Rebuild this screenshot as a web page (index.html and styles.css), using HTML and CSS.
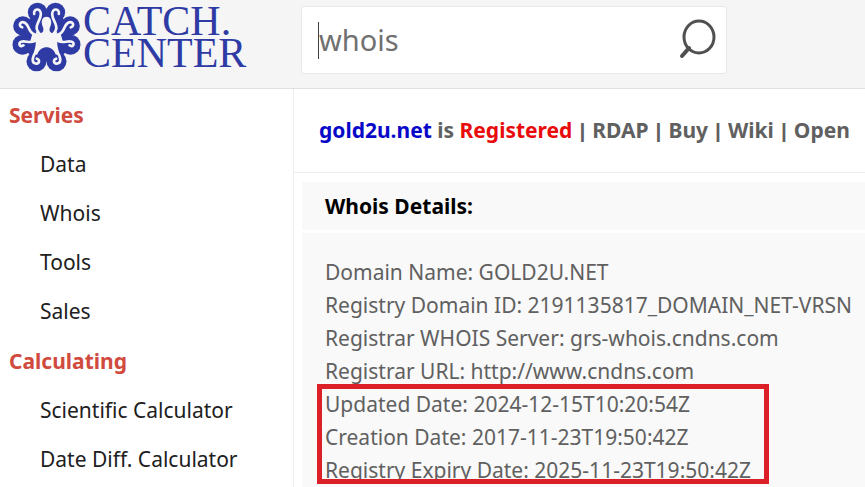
FILE: index.html
```
<!DOCTYPE html>
<html lang="en">
<head>
  <meta charset="UTF-8" />
  <meta name="viewport" content="width=device-width, initial-scale=1.0" />
  <title>gold2u.net - Whois - Catch.Center</title>
  <link rel="stylesheet" href="styles.css">
</head>
<body>

  <header class="header">
    <a class="logo" href="#">
      <svg class="logo-mark" viewBox="14 6 204 210" aria-hidden="true">
        <g fill="#2f3ba5">
          <circle cx="89" cy="37" r="29" />
          <circle cx="143" cy="37" r="29" />
          <circle cx="187" cy="78" r="29" />
          <circle cx="45" cy="78" r="29" />
          <circle cx="44" cy="134" r="30" />
          <circle cx="188" cy="134" r="30" />
          <circle cx="86" cy="184" r="30" />
          <circle cx="146" cy="184" r="30" />
          <circle cx="116" cy="110" r="74" />
        </g>
        <g fill="none" stroke="#f5f5f5" stroke-width="8" stroke-linecap="round" stroke-linejoin="round">
          <path d="M79 42C76 26 98 22 99 42C99 60 83 72 87 88C89 97 95 102 101 108" />
          <path d="M153 42C156 26 134 22 133 42C133 60 149 72 145 88C143 97 137 102 131 108" />
          <path d="M43 82C31 78 36 64 48 67C64 71 60 94 76 101L98 110" />
          <path d="M189 82C201 78 196 64 184 67C168 71 172 94 156 101L134 110" />
          <path d="M47 136C37 144 29 129 40 125C54 121 66 131 80 123L98 116" />
          <path d="M185 136C195 144 203 129 192 125C178 121 166 131 152 123L134 116" />
          <path d="M87 176C99 180 93 195 81 190C69 185 76 167 84 156L96 134" />
          <path d="M145 176C133 180 139 195 151 190C163 185 156 167 148 156L136 134" />
        </g>
        <g fill="#f5f5f5">
          <path d="M116 50C105 50 101 60 102 70C103 80 109 85 106 94C102 102 92 102 84 94L86 106L74 100L66 128L84 126C84 140 80 150 77 162L88 164C94 148 104 142 116 142C128 142 138 148 144 164L155 162C152 150 148 140 148 126L166 128L158 100L146 106L148 94C140 102 130 102 126 94C123 85 129 80 130 70C131 60 127 50 116 50Z" />
        </g>
      </svg>
      <span class="logo-text">CATCH.<br>CENTER</span>
    </a>
    <form class="search">
      <span class="search-cursor"></span>
      <input class="search-input" type="text" aria-label="Search" value="whois">
      <button class="search-button" type="button" aria-label="Search">
        <svg viewBox="0 0 42 42" width="42" height="42" fill="none" stroke="#505050" stroke-linecap="round">
          <ellipse cx="23" cy="18" rx="15" ry="16" stroke-width="3" />
          <path d="M13 29L6 37" stroke-width="4" />
        </svg>
      </button>
    </form>
  </header>

  <div class="page">
    <nav class="sidebar">
      <h2>Servies</h2>
      <ul>
        <li><a href="#">Data</a></li>
        <li><a href="#">Whois</a></li>
        <li><a href="#">Tools</a></li>
        <li><a href="#">Sales</a></li>
      </ul>
      <h2>Calculating</h2>
      <ul>
        <li><a href="#">Scientific Calculator</a></li>
        <li><a href="#">Date Diff. Calculator</a></li>
      </ul>
    </nav>

    <main class="content">
      <h1 class="status">
        <span><a class="domain" href="#">gold2u.net</a> is <span class="registered">Registered</span></span>
        <span class="pipe">|</span>
        <a href="#">RDAP</a>
        <span class="pipe">|</span>
        <a href="#">Buy</a>
        <span class="pipe">|</span>
        <a href="#">Wiki</a>
        <span class="pipe">|</span>
        <a href="#">Open</a>
      </h1>
      <section class="details">
        <h2 class="details-title">Whois Details:</h2>
        <div class="details-body">
          <div>Domain Name: GOLD2U.NET</div>
          <div>Registry Domain ID: 2191135817_DOMAIN_NET-VRSN</div>
          <div>Registrar WHOIS Server: grs-whois.cndns.com</div>
          <div>Registrar URL: http://www.cndns.com</div>
          <div class="dates">
            <div>Updated Date: 2024-12-15T10:20:54Z</div>
            <div>Creation Date: 2017-11-23T19:50:42Z</div>
            <div>Registry Expiry Date: 2025-11-23T19:50:42Z</div>
          </div>
        </div>
      </section>
    </main>
  </div>

</body>
</html>
```
FILE: styles.css
```
*, *::after {
  box-sizing: border-box;
}
body {
  font-family: 'Segoe UI', 'Noto Sans', sans-serif;
  font-size: 21px;
  color: #606060;
  background-color: #fff;
  margin: 0;
  min-height: 100vh;
  display: flex;
  flex-direction: column;
}
a {
  color: inherit;
  text-decoration: none;
}
h1, h2, ul {
  margin: 0;
  padding: 0;
}
.header {
  display: flex;
  align-items: flex-start;
  background-color: #f5f5f5;
  border-bottom: 1px solid #e0e0e0;
  height: 89px;
}
.logo {
  display: flex;
  flex: 0 0 301px;
  gap: 2px;
  padding: 2px 0 0 12px;
}
.logo-mark {
  width: 69px;
  height: 70px;
}
.logo-text {
  font-family: 'Liberation Serif', serif;
  font-size: 42px;
  line-height: 32px;
  padding-top: 3px;
  color: #2f3ba5;
}
.search {
  display: flex;
  align-items: center;
  flex: 0 1 426px;
  min-width: 0;
  height: 68px;
  margin-top: 6px;
  padding: 0 8px 0 16px;
  background-color: #fff;
  border: 1px solid #e8e8e8;
  border-radius: 3px;
}
.search-cursor {
  width: 1px;
  height: 37px;
  background-color: #404040;
}
.search-input {
  flex: 1;
  min-width: 0;
  border: 0;
  padding: 0 0 2px;
  outline: none;
  background: none;
  font-family: inherit;
  font-size: 29px;
  color: #707070;
}
.search-button {
  display: flex;
  border: 0;
  padding: 0;
  background: none;
  cursor: pointer;
}
.page {
  display: flex;
  flex: 1;
}
.sidebar {
  flex: 0 0 294px;
  padding-top: 1px;
  border-right: 1px solid #eee;
}
.sidebar h2 {
  padding-left: 9px;
  font-size: 21px;
  line-height: 50px;
  color: #d04a3e;
}
.sidebar ul {
  list-style: none;
  padding-left: 40px;
  line-height: 49px;
  color: #202020;
}
.content {
  flex: 1;
  min-width: 0;
  display: flex;
  flex-direction: column;
}
.status {
  display: flex;
  gap: 7px;
  padding: 0 0 0 25px;
  font-size: 21px;
  line-height: 83px;
  white-space: nowrap;
  border-bottom: 1px solid #eee;
}
.pipe {
  font-family: 'Liberation Sans', sans-serif;
}
.domain {
  color: #0808c8;
}
.registered {
  color: #e80c0c;
}
.details {
  flex: 1;
  display: flex;
  flex-direction: column;
  gap: 3px;
  padding: 9px 0 0 8px;
}
.details-title {
  padding-left: 23px;
  font-size: 21px;
  line-height: 48px;
  color: #000;
  background-color: #f9f9f9;
}
.details-body {
  flex: 1;
  padding: 23px 0 0 23px;
  line-height: 33px;
  white-space: nowrap;
  background-color: #f9f9f9;
}
.dates {
  position: relative;
}
/* red frame over the dates */
.dates::after {
  content: "";
  position: absolute;
  top: -4px;
  left: -8px;
  width: 452px;
  height: 100px;
  border: 5px solid #dc2027;
}
```
